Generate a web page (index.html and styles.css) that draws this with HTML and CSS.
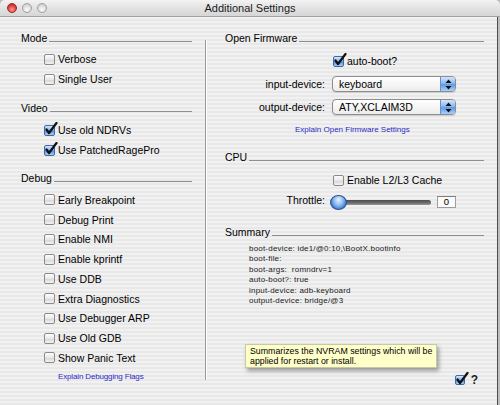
FILE: index.html
```html
<!DOCTYPE html>
<html>
<head>
<meta charset="utf-8">
<link rel="stylesheet" href="styles.css">
</head>
<body>
<div class="window">
  <div class="titlebar">
    <div class="lights"><span class="light close"></span><span class="light"></span><span class="light"></span></div>
    <div class="title">Additional Settings</div>
    <div></div>
  </div>
  <div class="content">
    <div class="col left">
      <div class="hdr"><span>Mode</span><i></i></div>
      <div class="items items-first">
        <div class="row"><span class="cb"></span>Verbose</div>
        <div class="row"><span class="cb"></span>Single User</div>
      </div>
      <div class="hdr hdr-video"><span>Video</span><i></i></div>
      <div class="items">
        <div class="row"><span class="cb on"><svg viewBox="0 0 14 14" width="14" height="14"><path d="M2.5 7.5 L5 11 L12.5 1" fill="none" stroke="#111" stroke-width="2.2" stroke-linecap="round" stroke-linejoin="round"/></svg></span>Use old NDRVs</div>
        <div class="row"><span class="cb on"><svg viewBox="0 0 14 14" width="14" height="14"><path d="M2.5 7.5 L5 11 L12.5 1" fill="none" stroke="#111" stroke-width="2.2" stroke-linecap="round" stroke-linejoin="round"/></svg></span>Use PatchedRagePro</div>
      </div>
      <div class="hdr hdr-debug"><span>Debug</span><i></i></div>
      <div class="items debug">
        <div class="row"><span class="cb"></span>Early Breakpoint</div>
        <div class="row"><span class="cb"></span>Debug Print</div>
        <div class="row"><span class="cb"></span>Enable NMI</div>
        <div class="row"><span class="cb"></span>Enable kprintf</div>
        <div class="row"><span class="cb"></span>Use DDB</div>
        <div class="row"><span class="cb"></span>Extra Diagnostics</div>
        <div class="row"><span class="cb"></span>Use Debugger ARP</div>
        <div class="row"><span class="cb"></span>Use Old GDB</div>
        <div class="row"><span class="cb"></span>Show Panic Text</div>
      </div>
      <div class="link link-debug">Explain Debugging Flags</div>
    </div>
    <div class="divider"></div>
    <div class="col right">
      <div class="hdr"><span>Open Firmware</span><i></i></div>
      <div class="form">
        <div></div>
        <div class="row ctl autoboot"><span class="cb on"><svg viewBox="0 0 14 14" width="14" height="14"><path d="M2.5 7.5 L5 11 L12.5 1" fill="none" stroke="#111" stroke-width="2.2" stroke-linecap="round" stroke-linejoin="round"/></svg></span>auto-boot?</div>
        <div class="lbl popup-row">input-device:</div>
        <div class="popup popup-row"><span>keyboard</span><b class="arrows"><svg viewBox="0 0 7 11" width="7" height="11"><path d="M3.5 0.5 L6.5 4 L0.5 4 Z M3.5 10.5 L6.5 7 L0.5 7 Z" fill="#111"/></svg></b></div>
        <div class="lbl popup-row">output-device:</div>
        <div class="popup popup-row"><span>ATY,XCLAIM3D</span><b class="arrows"><svg viewBox="0 0 7 11" width="7" height="11"><path d="M3.5 0.5 L6.5 4 L0.5 4 Z M3.5 10.5 L6.5 7 L0.5 7 Z" fill="#111"/></svg></b></div>
      </div>
      <div class="link link-of">Explain Open Firmware Settings</div>

      <div class="hdr hdr-cpu"><span>CPU</span><i></i></div>
      <div class="form">
        <div></div>
        <div class="row ctl l2"><span class="cb"></span>Enable L2/L3 Cache</div>
        <div class="lbl throttle-row">Throttle:</div>
        <div class="slider throttle-row"><span class="knob"></span><span class="track"></span><span class="value">0</span></div>
      </div>

      <div class="hdr hdr-summary"><span>Summary</span><i></i></div>
      <div class="summary">
        <div>boot-device: ide1/@0:10,\BootX.bootinfo</div>
        <div>boot-file:</div>
        <div>boot-args:&nbsp; romndrv=1</div>
        <div>auto-boot?: true</div>
        <div>input-device: adb-keyboard</div>
        <div>output-device: bridge/@3</div>
      </div>

      <div class="footer"><span class="cb on small"><svg viewBox="0 0 14 14" width="14" height="14"><path d="M2.5 7.5 L5 11 L12.5 1" fill="none" stroke="#111" stroke-width="2.2" stroke-linecap="round" stroke-linejoin="round"/></svg></span><span class="help">?</span></div>
    </div>
  </div>
  <div class="tooltip">Summarizes the NVRAM settings which will be<br>applied for restart or install.</div>
</div>
</body>
</html>
```
FILE: styles.css
```css
* { box-sizing: border-box; margin: 0; padding: 0; }
html, body { width: 500px; height: 405px; overflow: hidden; }
body {
  font-family: "Liberation Sans", Arial, sans-serif;
  font-size: 10.5px;
  color: #000;
  background: #bdbdbd;
}
.window {
  width: 500px;
  height: 405px;
  display: flex;
  flex-direction: column;
  position: relative;
}
.titlebar {
  height: 17px;
  flex: none;
  display: grid;
  grid-template-columns: 1fr auto 1fr;
  align-items: center;
  background: linear-gradient(#f3f3f3, #e2e2e2 50%, #d6d6d6);
  border-bottom: 1px solid #a3a3a3;
  border-radius: 5px 5px 0 0;
}
.lights { display: flex; gap: 5px; padding-left: 7px; }
.light {
  width: 10px; height: 10px; border-radius: 50%;
  background: radial-gradient(circle at 50% 70%, #fbfbfb, #dedede 55%, #bdbdbd);
  border: 1px solid #a0a0a0;
}
.light.close {
  background: radial-gradient(circle at 50% 70%, #ff9c94, #e5433b 55%, #b41d16);
  border-color: #8e2a24;
}
.title { font-size: 11px; color: #1a1a1a; }

.content {
  flex: 1;
  display: flex;
  width: 498px;
  background: repeating-linear-gradient(#f1f1f1 0 2px, #e8e8e8 2px 4px);
  border-right: 1px solid #4e4e4e;
}
.col { display: flex; flex-direction: column; }
.left { width: 205px; padding: 14px 13px 0 21px; }
.right { flex: 1; padding: 14px 13px 0 19px; }
.divider {
  width: 1px;
  height: 340px;
  margin-top: 23px;
  background: #9a9a9a;
  box-shadow: 1px 0 0 #fff;
}

.hdr { display: flex; align-items: center; height: 14px; }
.hdr i { flex: 1; height: 1px; background: #8f8f8f; margin: 7px 0 0 2px; }
.hdr-video { margin-top: 12px; }
.hdr-debug { margin-top: 11px; }
.hdr-cpu { margin-top: 15px; }
.hdr-summary { margin-top: 15px; }

.items { margin-top: 5px; padding-left: 23px; }
.items-first { margin-top: 4px; }
.row { height: 20px; display: flex; align-items: center; gap: 3px; white-space: nowrap; }
.debug .row { height: 19.75px; }

.cb {
  width: 11px; height: 11px; flex: none;
  border: 1px solid #8a8a8a;
  border-radius: 2px;
  background: linear-gradient(#fdfdfd, #e6e6e6 55%, #d9d9d9 60%, #f4f4f4);
  position: relative;
}
.cb.on {
  background: linear-gradient(#d6e8fd, #86b5ef 45%, #4f8ce0 55%, #a6d0fa);
  border-color: #3f6aa6;
}
.cb svg { position: absolute; left: -1px; top: -4px; }

.link { font-size: 8px; color: #2b2bc4; height: 10px; line-height: 10px; white-space: nowrap; }
.link-debug { margin-top: 4px; padding-left: 37px; letter-spacing: -0.15px; }
.link-of { margin-top: 10px; padding-left: 70px; }

.form { display: grid; grid-template-columns: 100px 1fr; column-gap: 7px; align-items: center; }
.lbl { text-align: right; white-space: nowrap; }
.ctl { height: 16px; padding-left: 1px; }
.autoboot { margin-top: 8px; }
.l2 { margin-top: 8px; }
.popup-row { margin-top: 7px; }
.popup {
  width: 124px; height: 16px;
  border: 1px solid #8d8d8d;
  border-radius: 4px;
  background: linear-gradient(#ffffff, #f4f4f4 60%, #ececec);
  display: flex; align-items: center;
  box-shadow: 0 1px 1px rgba(0,0,0,0.12);
}
.popup span { flex: 1; padding-left: 6px; }
.arrows {
  width: 15px; height: 100%;
  display: flex; align-items: center; justify-content: center;
  background: linear-gradient(#d4e6fc, #8dbaf2 45%, #5f98e6 55%, #a8d2fb);
  border-left: 1px solid #6a8fc4;
  border-radius: 0 3px 3px 0;
}

.throttle-row { margin-top: 6px; height: 16px; }
.slider { display: flex; align-items: center; margin-left: -2px; }
.knob {
  width: 17px; height: 15px; flex: none;
  border-radius: 50%;
  background: radial-gradient(ellipse at 50% 30%, #e8f3ff, #86b8f0 45%, #2f6fd0 80%, #1f4f9c);
  border: 1px solid #2c5190;
  z-index: 1;
}
.track {
  width: 93px; height: 5px; flex: none;
  margin-left: -9px;
  border-radius: 3px;
  background: linear-gradient(#4c4c4c, #6e6e6e 60%, #9a9a9a);
}
.value {
  width: 19px; height: 12px; flex: none;
  margin-left: 6px;
  border: 1px solid #9d9d9d;
  border-top-color: #7c7c7c;
  background: #fbfbfb;
  font-size: 9.5px; line-height: 10px; text-align: center;
}

.summary { margin-top: 5px; padding-left: 24px; font-size: 8px; letter-spacing: 0.2px; line-height: 10.4px; color: #1a1a1a; white-space: nowrap; }

.footer {
  margin-top: auto;
  align-self: flex-end;
  display: flex; align-items: center; gap: 6px;
  height: 12px;
  margin-bottom: 19px;
  margin-right: 6px;
}
.cb.small { width: 10px; height: 10px; }
.help { font-size: 12px; font-weight: bold; color: #222; }

.tooltip {
  position: absolute;
  left: 245px; top: 344px;
  width: 192px; height: 24px;
  padding: 1px 4px;
  background: #ffffc9;
  border: 1px solid #c8c8a8;
  box-shadow: 2px 3px 4px rgba(0,0,0,0.35);
  font-size: 8.8px; line-height: 10px;
  white-space: nowrap;
}
```
